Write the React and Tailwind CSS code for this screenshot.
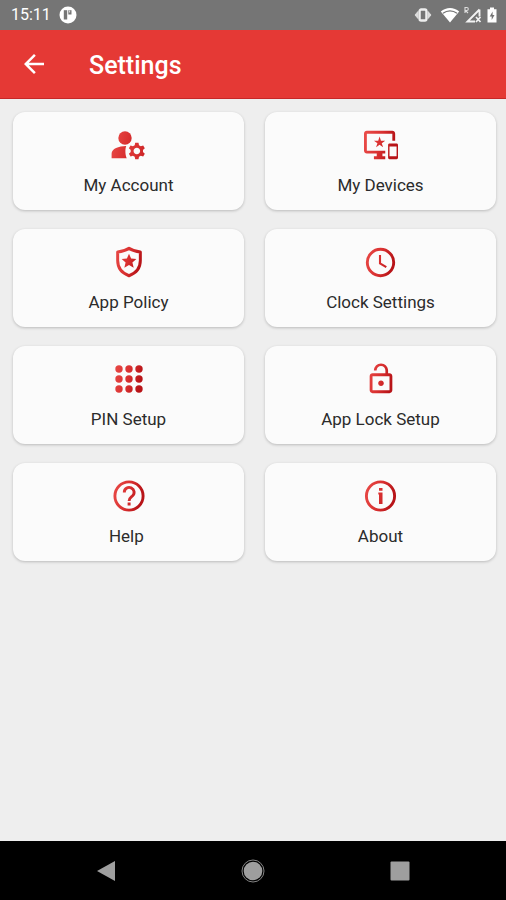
import React from 'react';

const menuItems = [
  { id: 'account', label: 'My Account', Icon: AccountIcon },
  { id: 'devices', label: 'My Devices', Icon: DevicesIcon },
  { id: 'policy', label: 'App Policy', Icon: PolicyIcon },
  { id: 'clock', label: 'Clock Settings', Icon: ClockIcon },
  { id: 'pin', label: 'PIN Setup', Icon: PinIcon },
  { id: 'lock', label: 'App Lock Setup', Icon: LockIcon },
  { id: 'help', label: 'Help\u00a0', Icon: HelpIcon },
  { id: 'about', label: 'About', Icon: AboutIcon },
];

// Red gradient shared by all the menu icons
function Gradient({ id, size = 24 }) {
  return (
    <defs>
      <linearGradient id={id} gradientUnits="userSpaceOnUse" x1="0" y1="0" x2={size} y2={size / 4}>
        <stop offset="0.1" stopColor="#e94a47" />
        <stop offset="0.55" stopColor="#d93030" />
        <stop offset="0.9" stopColor="#b81418" />
      </linearGradient>
    </defs>
  );
}

function AccountIcon() {
  return (
    <svg viewBox="0 0 36 36" className="h-9 w-9" fill="url(#g-account)" aria-hidden="true">
      <Gradient id="g-account" size={36} />
      <circle cx="14" cy="11" r="6.7" />
      <path d="M15.2 19C7.600 19.2 .6 21.6 .6 26.8V31.3H15.800C14.4 28.8 13.8 22.5 15.2 19z" />
      <path
        transform="translate(-2.2 -2.4) scale(1.65)"
        d="M20.75 16c0-.22-.03-.42-.06-.63l1.14-1.01-1-1.73-1.45.49c-.32-.27-.68-.48-1.08-.63L18 11h-2l-.3 1.49c-.4.15-.76.36-1.08.63l-1.45-.49-1 1.73 1.14 1.01c-.03.21-.06.41-.06.63s.03.42.06.63l-1.14 1.01 1 1.73 1.45-.49c.32.27.68.48 1.08.63L16 21h2l.3-1.49c.4-.15.76-.36 1.08-.63l1.45.49 1-1.73-1.14-1.01c.03-.21.06-.41.06-.63zM17 18c-1.1 0-2-.9-2-2s.9-2 2-2 2 .9 2 2-.9 2-2 2z"
      />
    </svg>
  );
}

function DevicesIcon() {
  return (
    <svg viewBox="0 0 24 24" className="h-[34px] w-[34px]" fill="url(#g-devices)" aria-hidden="true">
      <Gradient id="g-devices" />
      <path d="M23 11.01L18 11c-.55 0-1 .45-1 1v9c0 .55.45 1 1 1h5c.55 0 1-.45 1-1v-9c0-.55-.45-.99-1-.99zM23 20h-5v-7h5v7zM20 2H2C.89 2 0 2.89 0 4v12c0 1.1.89 2 2 2h7v2H7v2h8v-2h-2v-2h2v-2H2V4h18v5h2V4c0-1.11-.9-2-2-2zm-8.03 7L11 6l-.97 3H7l2.47 1.76-.94 2.91 2.47-1.8 2.47 1.8-.94-2.91L15 9h-3.03z" />
    </svg>
  );
}

function PolicyIcon() {
  return (
    <svg viewBox="0 0 24 24" className="h-[34px] w-[34px]" fill="url(#g-policy)" aria-hidden="true">
      <Gradient id="g-policy" />
      <path
        d="M12 2.3C9.7 3.9 7 4.6 4 4.9V11c0 5.2 3.3 9 8 10.7 4.7-1.7 8-5.5 8-10.7V4.9C17 4.6 14.3 3.9 12 2.3z"
        fill="none"
        stroke="url(#g-policy)"
        strokeWidth="2.1"
        strokeLinejoin="round"
      />
      <path d="M12 6.2l1.5 3.4 3.7.3-2.8 2.5.9 3.7-3.3-2-3.3 2 .9-3.7-2.8-2.5 3.7-.3z" />
    </svg>
  );
}

function ClockIcon() {
  return (
    <svg viewBox="0 0 36 36" className="h-9 w-9" fill="none" stroke="url(#g-clock)" aria-hidden="true">
      <Gradient id="g-clock" size={36} />
      <circle cx="17.5" cy="18.5" r="13.2" strokeWidth="2.9" />
      <path d="M17 11v8.3l6.3 3.8" strokeWidth="2.1" />
    </svg>
  );
}

function PinIcon() {
  const points = [8, 18, 28];
  return (
    <svg viewBox="0 0 36 36" className="h-9 w-9" fill="url(#g-pin)" aria-hidden="true">
      <Gradient id="g-pin" size={36} />
      {points.map((y) => points.map((x) => <circle key={`${x}-${y}`} cx={x} cy={y} r="3.7" />))}
    </svg>
  );
}

function LockIcon() {
  return (
    <svg viewBox="0 0 24 24" className="h-[34px] w-[34px]" fill="url(#g-lock)" aria-hidden="true">
      <Gradient id="g-lock" />
      <path d="M12 17c1.1 0 2-.9 2-2s-.9-2-2-2-2 .9-2 2 .9 2 2 2zm6-9h-1V6c0-2.76-2.24-5-5-5S7 3.24 7 6h1.9c0-1.71 1.39-3.1 3.1-3.1s3.1 1.39 3.1 3.1v2H6c-1.1 0-2 .9-2 2v10c0 1.1.9 2 2 2h12c1.1 0 2-.9 2-2V10c0-1.1-.9-2-2-2zm0 12H6V10h12v10z" />
    </svg>
  );
}

function HelpIcon() {
  return (
    <svg viewBox="0 0 36 36" className="h-9 w-9" fill="url(#g-help)" aria-hidden="true">
      <Gradient id="g-help" size={36} />
      <circle cx="18" cy="18" r="14.1" fill="none" stroke="url(#g-help)" strokeWidth="2.9" />
      <path
        d="M13.3 14.5a4.9 4.9 0 1 1 8.1 3.5c-1.7 1.5-3.3 2.3-3.3 5"
        fill="none"
        stroke="url(#g-help)"
        strokeWidth="2.9"
      />
      <path d="M16.6 24.5h3v3h-3z" />
    </svg>
  );
}

function AboutIcon() {
  return (
    <svg viewBox="0 0 36 36" className="h-9 w-9" fill="url(#g-about)" aria-hidden="true">
      <Gradient id="g-about" size={36} />
      <circle cx="17.5" cy="18" r="14.1" fill="none" stroke="url(#g-about)" strokeWidth="2.9" />
      <path d="M16 10h3.5v2.8H16zM15.3 14.5h4.2V26H16v-9.5h-.7z" />
    </svg>
  );
}

function StatusBar() {
  return (
    <div className="flex h-[30px] items-center bg-[#757575] pr-2 pl-[11px] text-white">
      <span className="w-10 text-base leading-5">15:11</span>
      <svg viewBox="0 0 18 18" className="ml-2 h-[18px] w-[18px]" aria-hidden="true">
        <circle cx="9" cy="9" r="8.5" fill="#fff" />
        <path d="M4.8 4.2h3.4v9.3H4.800z" fill="#757575" />
        <path d="M9.300 4.200h3.200v4.300H9.300z" fill="#757575" />
        <path d="M10.300 4.600h.8v2h-.8z" fill="#fff" />
      </svg>
      <div className="ml-auto flex items-center gap-1">
        {/* vibrate */}
        <svg viewBox="0 0 18 16" className="mr-1 h-4 w-[18px]" aria-hidden="true">
          <path d="M4 4.500L1 8l3 3.500zM14 4.500L17 8l-3 3.500z" fill="#dcdcdc" stroke="#dcdcdc" />
          <rect x="5.600" y="2.500" width="6.800" height="11" rx="1.500" fill="none" stroke="#eee" strokeWidth="2.300" />
        </svg>
        {/* wifi */}
        <svg viewBox="0 0 20 16" className="h-4 w-5" aria-hidden="true">
          <path d="M.8 4.600C6-.2 14-.2 19.200 4.600L10 15.500z" fill="#fff" />
          <path d="M3 6.300c4.200-3.300 9.800-3.300 14 0" fill="none" stroke="#757575" strokeWidth="1.200" />
        </svg>
        {/* roaming signal */}
        <svg viewBox="0 0 18 18" className="h-[18px] w-[18px]" aria-hidden="true">
          <path d="M1 7V1.500h1.800a1.400 1.400 0 0 1 0 3H1.500L4 7" fill="none" stroke="#ddd" strokeWidth="1.100" />
          <path d="M15.500 3.500v7M15.500 3.500L3.500 15.500h7.500" fill="none" stroke="#f3f3f3" strokeWidth="1.900" />
          <path d="M12 11l4.500 5M16.500 11L12 16" stroke="#f3f3f3" strokeWidth="1.700" />
        </svg>
        {/* battery */}
        <svg viewBox="0 0 12 18" className="h-[18px] w-3" aria-hidden="true">
          <path d="M4 1.500h4v1.700h2.500v13.300h-9V3.200H4z" fill="#fff" />
          <path d="M6.600 5.500L3.700 10.500h2v3.500l2.800-5h-1.900z" fill="#757575" />
        </svg>
      </div>
    </div>
  );
}

function Header() {
  return (
    <header className="flex h-[69px] items-center border-b border-[#c62828] bg-[#e53935] pl-[19px] text-white">
      <button type="button" aria-label="Back">
        <svg viewBox="0 0 24 24" className="h-[30px] w-[30px]" fill="currentColor" aria-hidden="true">
          <path d="M20 11H7.830l5.590-5.590L12 4l-8 8 8 8 1.410-1.410L7.830 13H20v-2z" />
        </svg>
      </button>
      <h1 className="ml-10 pt-1 text-[25px] leading-8 font-medium">Settings</h1>
    </header>
  );
}

function MenuCard({ label, Icon }) {
  return (
    <button
      type="button"
      className="flex flex-col items-center rounded-xl bg-[#fbfbfb] pt-[15px] pb-[13px] shadow-[0_1px_3px_rgba(0,0,0,0.22)]"
    >
      <span className="flex h-9 w-9 items-center justify-center">
        <Icon />
      </span>
      <span className="mt-[10px] text-[17px] leading-6 text-[#2b2b2b]">{label}</span>
    </button>
  );
}

function NavigationBar() {
  return (
    <nav className="grid h-[59px] grid-cols-3 items-center justify-items-center bg-black px-8">
      <button type="button" aria-label="Back">
        <svg viewBox="0 0 20 22" className="h-[22px] w-5" aria-hidden="true">
          <path d="M1 11L19 1v20z" fill="#9e9e9e" />
        </svg>
      </button>
      <button type="button" aria-label="Home">
        <svg viewBox="0 0 24 24" className="h-6 w-6" aria-hidden="true">
          <circle cx="12" cy="12" r="9.3" fill="#9e9e9e" />
          <circle cx="12" cy="12" r="11" fill="none" stroke="#858585" strokeWidth="1" />
        </svg>
      </button>
      <button type="button" aria-label="Recent apps">
        <svg viewBox="0 0 20 20" className="h-5 w-5" aria-hidden="true">
          <rect x="0.5" y="0.5" width="19" height="19" rx="1" fill="#9e9e9e" />
        </svg>
      </button>
    </nav>
  );
}

function App() {
  return (
    <div className="flex min-h-screen flex-col bg-[#eeeeee] font-[Roboto,sans-serif]">
      <StatusBar />
      <Header />
      <main className="grow pt-[13px] pr-[10px] pb-5 pl-[13px]">
        <div className="grid grid-cols-2 gap-x-[21px] gap-y-[19px]">
          {menuItems.map((item) => (
            <MenuCard key={item.id} label={item.label} Icon={item.Icon} />
          ))}
        </div>
      </main>
      <NavigationBar />
    </div>
  );
}

export default App;
